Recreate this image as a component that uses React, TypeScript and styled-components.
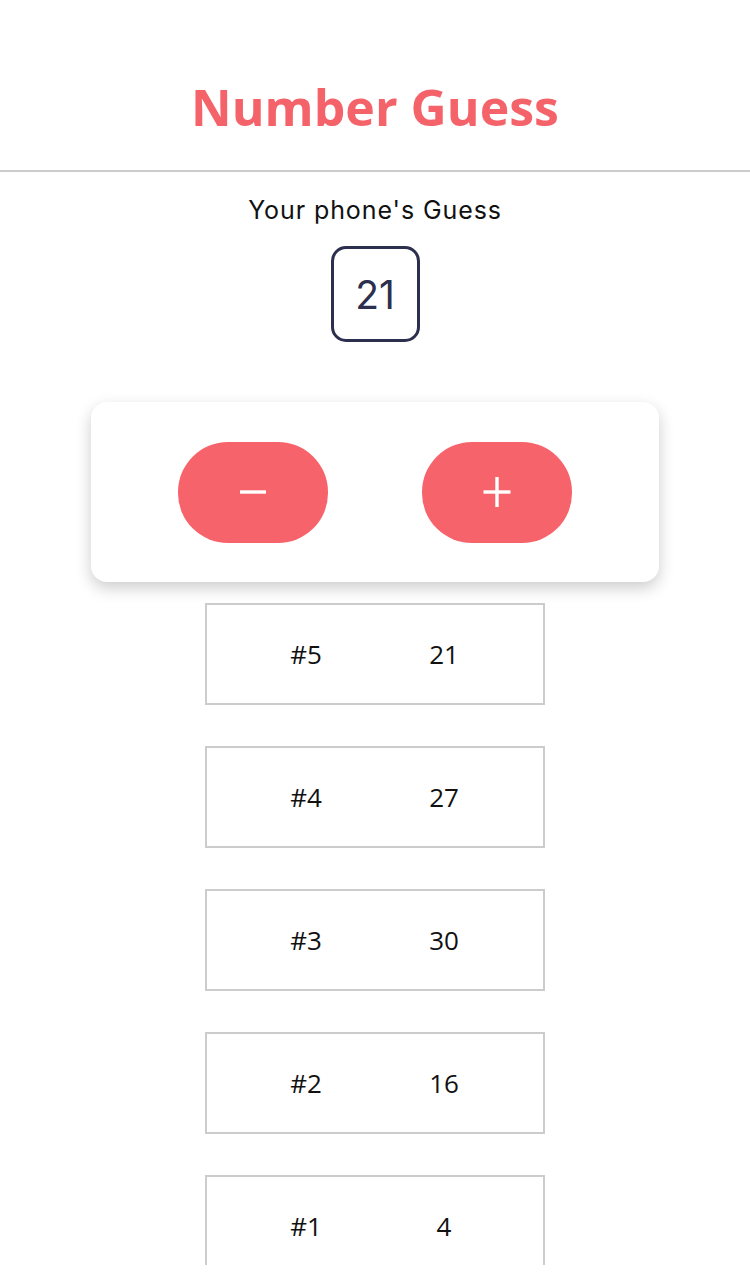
import React from "react";
import styled, { createGlobalStyle } from "styled-components";

const GlobalStyle = createGlobalStyle`
  html, body { margin: 0; padding: 0; background: #ffffff; }
  body { font-family: "Open Sans", sans-serif; }
  * { box-sizing: border-box; }
`;

const Screen = styled.div`
  width: 750px;
  height: 1286px;
  display: flex;
  flex-direction: column;
  background: #ffffff;
  overflow: hidden;
`;

const Header = styled.header`
  height: 172px;
  padding-top: 44px;
  display: flex;
  align-items: center;
  justify-content: center;
  border-bottom: 2px solid #cccccc;
`;

const Title = styled.h1`
  margin: 0;
  font-family: "Open Sans", sans-serif;
  font-weight: 700;
  font-size: 50px;
  color: #f5636a;
`;

const Body = styled.main`
  display: flex;
  flex-direction: column;
  align-items: center;
  padding-top: 21px;
`;

const Label = styled.div`
  font-family: Inter, "Liberation Sans", sans-serif;
  font-size: 25px;
  letter-spacing: 0.9px;
  color: #111111;
  line-height: 34px;
`;

const NumberBox = styled.div`
  margin-top: 19px;
  width: 89px;
  height: 96px;
  border: 3px solid #2c2f4d;
  border-radius: 15px;
  display: flex;
  align-items: center;
  justify-content: center;
  font-family: Inter, "Liberation Sans", sans-serif;
  font-size: 39px;
  color: #2c2f4d;
`;

const Card = styled.div`
  margin-top: 60px;
  width: 568px;
  height: 180px;
  background: #ffffff;
  border-radius: 16px;
  box-shadow: 0 6px 16px rgba(0, 0, 0, 0.2);
  display: flex;
  align-items: center;
  justify-content: center;
  gap: 94px;
`;

const RoundButton = styled.button`
  width: 150px;
  height: 101px;
  border: none;
  border-radius: 50px;
  background: #f7636b;
  display: flex;
  align-items: center;
  justify-content: center;
  padding: 0;
  cursor: pointer;
`;

const List = styled.ul`
  list-style: none;
  margin: 21px 0 0;
  padding: 0;
  height: 662px;
  overflow: hidden;
  display: flex;
  flex-direction: column;
  gap: 41px;
`;

const Item = styled.li`
  flex: none;
  width: 340px;
  height: 102px;
  border: 2px solid #cccccc;
  display: flex;
  align-items: center;
  justify-content: center;
  gap: 38px;
`;

const Cell = styled.span`
  width: 100px;
  text-align: center;
  font-family: "Open Sans", sans-serif;
  font-size: 26px;
  color: #111111;
`;

const MinusIcon = () => (
  <svg width="34" height="34" viewBox="0 0 34 34">
    <line x1="4" y1="17" x2="30" y2="17" stroke="#fff" strokeWidth="3.4" />
  </svg>
);

const PlusIcon = () => (
  <svg width="34" height="34" viewBox="0 0 34 34">
    <line x1="3.5" y1="17" x2="30.5" y2="17" stroke="#fff" strokeWidth="3.4" />
    <line x1="17" y1="2" x2="17" y2="32" stroke="#fff" strokeWidth="3.4" />
  </svg>
);

const guesses = [
  { round: 5, value: 21 },
  { round: 4, value: 27 },
  { round: 3, value: 30 },
  { round: 2, value: 16 },
  { round: 1, value: 4 },
];

export default function App() {
  return (
    <>
      <GlobalStyle />
      <Screen>
        <Header>
          <Title>Number Guess</Title>
        </Header>
        <Body>
          <Label>Your phone's Guess</Label>
          <NumberBox>21</NumberBox>
          <Card>
            <RoundButton aria-label="lower">
              <MinusIcon />
            </RoundButton>
            <RoundButton aria-label="greater">
              <PlusIcon />
            </RoundButton>
          </Card>
          <List>
            {guesses.map((g) => (
              <Item key={g.round}>
                <Cell>#{g.round}</Cell>
                <Cell>{g.value}</Cell>
              </Item>
            ))}
          </List>
        </Body>
      </Screen>
    </>
  );
}
